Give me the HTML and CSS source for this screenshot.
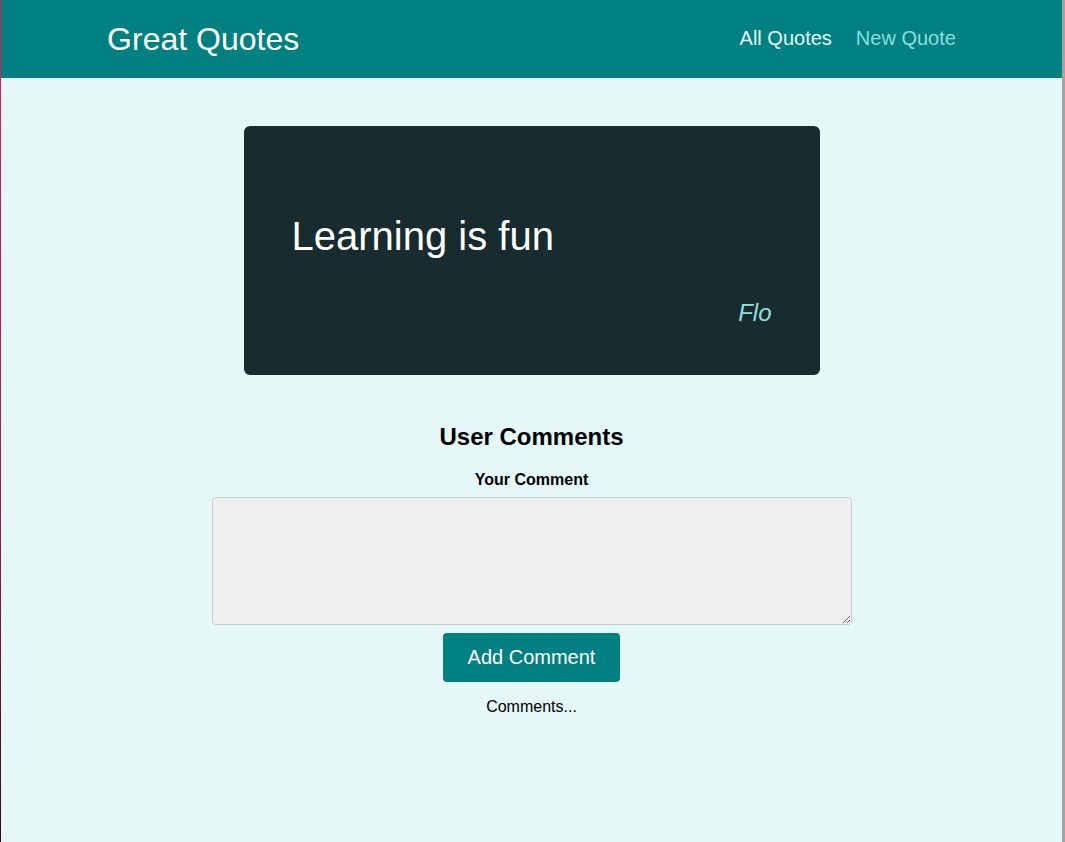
FILE: index.html
```html
<!DOCTYPE html>
<html lang="en">
<head>
<meta charset="utf-8">
<title>Great Quotes</title>
<link rel="stylesheet" href="styles.css">
</head>
<body>
<header class="header">
  <div class="logo">Great Quotes</div>
  <nav class="nav">
    <a href="#" class="nav-link active">All Quotes</a>
    <a href="#" class="nav-link">New Quote</a>
  </nav>
</header>
<main class="main">
  <figure class="quote">
    <p class="quote-text">Learning is fun</p>
    <figcaption class="quote-author">Flo</figcaption>
  </figure>
  <section class="comments">
    <h2 class="comments-title">User Comments</h2>
    <form class="comment-form">
      <label class="comment-label" for="comment">Your Comment</label>
      <textarea id="comment" class="comment-input"></textarea>
      <button type="button" class="btn">Add Comment</button>
    </form>
    <p class="comments-list">Comments...</p>
  </section>
</main>
</body>
</html>
```

FILE: styles.css
```css
* { box-sizing: border-box; }

html {
  min-height: 100%;
  border-right: 3px solid #a3a3a3;
  background: #e5f7f7;
}

body {
  margin: 0;
  min-height: 842px;
  font-family: "Liberation Sans", Arial, sans-serif;
  color: #000;
  background: #e5f7f7;
  border-left: 1px solid #e0184c;
  border-image: linear-gradient(#e8194c 0%, #b0163f 60%, #2a0a14 100%) 1;
}

.header {
  height: 78px;
  display: flex;
  align-items: center;
  justify-content: space-between;
  background: #008080;
  padding: 0 10%;
}

.logo {
  font-size: 32px;
  color: #fff;
}

.nav {
  display: flex;
  gap: 24px;
  padding-bottom: 2px;
}

.nav-link {
  font-size: 20px;
  text-decoration: none;
  color: #88dfdf;
}

.nav-link.active { color: #e6fcfc; }

.main {
  width: 40rem;
  margin: 48px auto 0;
}

.quote {
  width: 90%;
  margin: 0 auto;
  background: #182b2e;
  border-radius: 6px;
  padding: 48px;
  color: #fff;
}

.quote-text {
  margin: 39px 0 40px;
  font-size: 40px;
  line-height: 46px;
}

.quote-author {
  font-size: 24px;
  line-height: 28px;
  font-style: italic;
  text-align: right;
  color: #95dede;
}

.comments {
  text-align: center;
}

.comments-title {
  margin: 48px 0 0;
  font-size: 24px;
  line-height: 28px;
  font-weight: bold;
}

.comment-form {
  display: flex;
  flex-direction: column;
  align-items: center;
}

.comment-label {
  display: block;
  margin-top: 20px;
  font-size: 16px;
  font-weight: bold;
  line-height: 18px;
}

.comment-input {
  display: block;
  width: 100%;
  height: 128px;
  margin-top: 8px;
  padding: 6px;
  font: inherit;
  background: #efefef;
  border: 1px solid #c1d1d1;
  border-radius: 4px;
}

.btn {
  margin-top: 8px;
  padding: 13px 25px;
  font-family: inherit;
  font-size: 20px;
  line-height: 23px;
  color: #fff;
  background: #008080;
  border: none;
  border-radius: 4px;
  cursor: pointer;
}

.comments-list {
  margin: 16px 0 0;
  font-size: 16px;
  line-height: 18px;
}
```
